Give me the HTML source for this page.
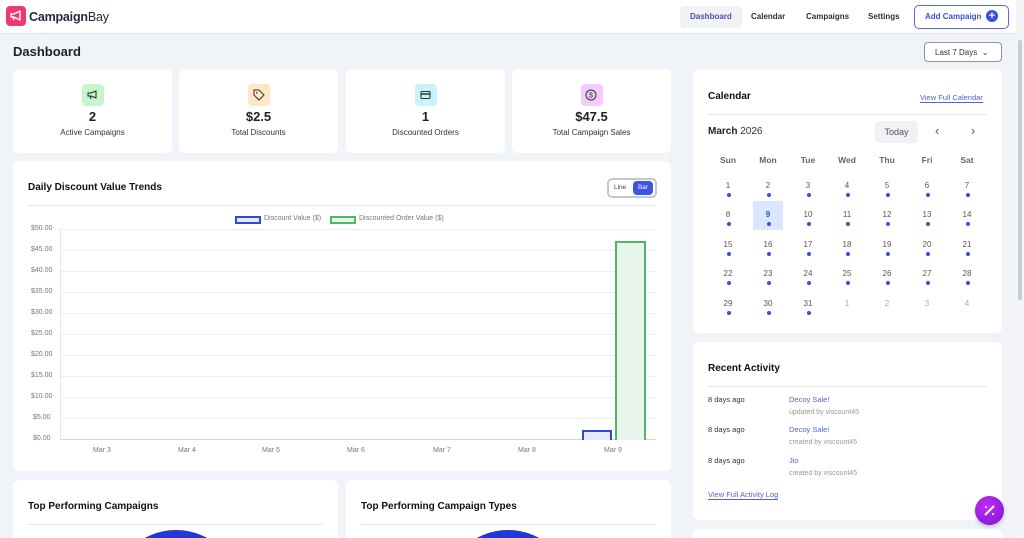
<!DOCTYPE html>
<html style="width:1024px;height:538px;overflow:hidden"><head><meta charset="utf-8"><style>
*{box-sizing:border-box;margin:0;padding:0}
body{width:1024px;height:538px;overflow:hidden;background:#f0f3f8;font-family:"Liberation Sans",sans-serif;color:#1d2127;position:relative}
.a{position:absolute}
.card{position:absolute;background:#fff;border-radius:6px}
.hdr{position:absolute;left:0;top:0;width:1016px;height:34px;background:#fff;border-bottom:1px solid #dde1e7}
.nav{position:absolute;top:12px;font-size:8px;font-weight:bold;color:#2a2f3a}
.stat .ic{position:absolute;left:50%;top:15px;width:22px;height:22px;margin-left:-11px;border-radius:4px}
.stat .n{position:absolute;left:0;right:0;top:40px;text-align:center;font-size:13px;font-weight:bold}
.stat .l{position:absolute;left:0;right:0;top:59px;text-align:center;font-size:8px;color:#333}
.t{font-size:10px;font-weight:bold;color:#111}
.hr{position:absolute;height:1px;background:#e3e6ea}
.yl{position:absolute;left:22px;width:32px;font-size:7px;color:#777;text-align:left}
.gl{position:absolute;left:60px;width:596px;height:1px;background:#eceef1}
.xl{position:absolute;top:447px;font-size:7px;color:#777;width:40px;text-align:center}
.wd{position:absolute;top:155px;width:40px;text-align:center;font-size:8.5px;font-weight:bold;color:#666}
.d{position:absolute;width:40px;text-align:center;font-size:8px;color:#555}
.dot{position:absolute;width:4px;height:4px;border-radius:2px;background:#3450e6}
.act{position:absolute;font-size:7.5px}
</style></head><body>
<div class="hdr"></div>
<div class="a" style="left:6px;top:6px;width:20px;height:20px;border-radius:4px;background:#f1376f"></div>
<svg class="a" style="left:9px;top:10px" width="14" height="12" viewBox="0 0 14 12"><path d="M2 4h3l6-3v9L5 7H2z M4 7l1 3" fill="none" stroke="#fff" stroke-width="1.4" stroke-linejoin="round"/></svg>
<div class="a" style="left:29px;top:10px;font-size:12.5px;font-weight:bold;color:#1f2a3c;letter-spacing:-0.2px">Campaign<span style="font-weight:normal">Bay</span></div>
<div class="a" style="left:680px;top:6px;width:62px;height:22px;border-radius:4px;background:#f0f2f5"></div>
<div class="nav" style="left:690px;color:#4a4fb8">Dashboard</div>
<div class="nav" style="left:751px">Calendar</div>
<div class="nav" style="left:806px">Campaigns</div>
<div class="nav" style="left:868px">Settings</div>
<div class="a" style="left:914px;top:5px;width:95px;height:24px;border:1px solid #5468e8;border-radius:5px;background:#fff"></div>
<div class="nav" style="left:925px;color:#3d4fd8">Add Campaign</div>
<div class="a" style="left:986px;top:10px;width:12px;height:12px;border-radius:6px;background:#3d4fd8;color:#fff;font-size:11px;line-height:12px;text-align:center;font-weight:bold">+</div>
<div class="a" style="left:1016px;top:0;width:8px;height:538px;background:#f4f5f7"></div>
<div class="a" style="left:1018px;top:40px;width:4px;height:260px;background:#c9ccd1;border-radius:2px"></div>

<div class="a" style="left:13px;top:44px;font-size:13px;font-weight:bold">Dashboard</div>
<div class="a" style="left:924px;top:42px;width:78px;height:20px;border:1px solid #8f959e;border-radius:4px;background:#fff;font-size:8px;color:#333;padding:5px 0 0 10px">Last 7 Days &nbsp;⌄</div>

<div class="card stat" style="left:13px;top:69px;width:159px;height:84px"><div class="ic" style="background:#c7f6cd"></div><svg class="a" style="left:74px;top:21px" width="11" height="10" viewBox="0 0 11 10"><path d="M1 3h3l5-2v7L4 6H1z M3 6l1 3" fill="none" stroke="#222" stroke-width="1"/></svg><div class="n">2</div><div class="l">Active Campaigns</div></div>
<div class="card stat" style="left:179px;top:69px;width:159px;height:84px"><div class="ic" style="background:#fde7c4"></div><svg class="a" style="left:74px;top:20px" width="12" height="12" viewBox="0 0 12 12"><path d="M1 1h5l5 5-5 5-5-5z" fill="none" stroke="#333" stroke-width="1"/><circle cx="3.8" cy="3.8" r=".8" fill="#333"/></svg><div class="n">$2.5</div><div class="l">Total Discounts</div></div>
<div class="card stat" style="left:346px;top:69px;width:159px;height:84px"><div class="ic" style="background:#c8f3fb"></div><svg class="a" style="left:74px;top:21px" width="11" height="10" viewBox="0 0 11 10"><rect x="1" y="1.5" width="9" height="7" rx="1" fill="none" stroke="#333" stroke-width="1.1"/><path d="M1 4h9" stroke="#333" stroke-width="1.5"/></svg><div class="n">1</div><div class="l">Discounted Orders</div></div>
<div class="card stat" style="left:512px;top:69px;width:159px;height:84px"><div class="ic" style="background:#f3ccfb"></div><svg class="a" style="left:73px;top:20px" width="12" height="12" viewBox="0 0 12 12"><circle cx="6" cy="6" r="5" fill="none" stroke="#333" stroke-width="1"/><text x="6" y="8.5" font-size="7" text-anchor="middle" fill="#333" font-family="Liberation Sans">$</text></svg><div class="n">$47.5</div><div class="l">Total Campaign Sales</div></div>

<div class="card" style="left:13px;top:161px;width:658px;height:310px"></div>
<div class="a t" style="left:28px;top:182px">Daily Discount Value Trends</div>
<div class="a" style="left:607px;top:178px;width:50px;height:20px;border:2px solid #c4c7cc;border-radius:5px;background:#fff"></div>
<div class="a" style="left:614px;top:184px;font-size:6.5px;color:#444">Line</div>
<div class="a" style="left:633px;top:181px;width:20px;height:14px;border-radius:4px;background:#3d55e6;color:#fff;font-size:6.5px;text-align:center;line-height:14px">Bar</div>
<div class="hr" style="left:28px;top:205px;width:628px"></div>
<div class="a" style="left:235px;top:216px;width:26px;height:8px;border:2px solid #2f48d6;background:#e6e9fb"></div>
<div class="a" style="left:264px;top:215px;font-size:7px;color:#777">Discount Value ($)</div>
<div class="a" style="left:330px;top:216px;width:26px;height:8px;border:2px solid #4fb865;background:#e8f5ea"></div>
<div class="a" style="left:359px;top:215px;font-size:7px;color:#777">Discounted Order Value ($)</div>
<div class="gl" style="top:229px"></div><div class="yl" style="top:225px;left:31px">$50.00</div>
<div class="gl" style="top:250px"></div><div class="yl" style="top:246px;left:31px">$45.00</div>
<div class="gl" style="top:271px"></div><div class="yl" style="top:267px;left:31px">$40.00</div>
<div class="gl" style="top:292px"></div><div class="yl" style="top:288px;left:31px">$35.00</div>
<div class="gl" style="top:313px"></div><div class="yl" style="top:309px;left:31px">$30.00</div>
<div class="gl" style="top:334px"></div><div class="yl" style="top:330px;left:31px">$25.00</div>
<div class="gl" style="top:355px"></div><div class="yl" style="top:351px;left:31px">$20.00</div>
<div class="gl" style="top:376px"></div><div class="yl" style="top:372px;left:31px">$15.00</div>
<div class="gl" style="top:397px"></div><div class="yl" style="top:393px;left:31px">$10.00</div>
<div class="gl" style="top:418px"></div><div class="yl" style="top:414px;left:33px">$5.00</div>
<div class="gl" style="top:439px;background:#d5d8dc"></div><div class="yl" style="top:435px;left:33px">$0.00</div>
<div class="a" style="left:60px;top:229px;width:1px;height:211px;background:#e3e5e8"></div>
<div class="a" style="left:582px;top:430px;width:30px;height:10px;border:2px solid #2f48d6;border-bottom:none;background:#e6e9fb"></div>
<div class="a" style="left:615px;top:241px;width:31px;height:199px;border:2px solid #4fb865;border-bottom:none;background:#e8f5ea"></div>
<div class="xl" style="left:82px">Mar 3</div><div class="xl" style="left:167px">Mar 4</div><div class="xl" style="left:251px">Mar 5</div><div class="xl" style="left:336px">Mar 6</div><div class="xl" style="left:422px">Mar 7</div><div class="xl" style="left:507px">Mar 8</div><div class="xl" style="left:593px">Mar 9</div>

<div class="card" style="left:13px;top:480px;width:325px;height:58px;overflow:hidden;border-radius:6px 6px 0 0"><div class="a" style="left:98px;top:50px;width:130px;height:130px;border-radius:50%;background:#2238d6"></div></div>
<div class="a t" style="left:28px;top:501px">Top Performing Campaigns</div>
<div class="hr" style="left:28px;top:524px;width:295px"></div>
<div class="card" style="left:346px;top:480px;width:325px;height:58px;overflow:hidden;border-radius:6px 6px 0 0"><div class="a" style="left:97px;top:50px;width:130px;height:130px;border-radius:50%;background:#2238d6"></div></div>
<div class="a t" style="left:361px;top:501px">Top Performing Campaign Types</div>
<div class="hr" style="left:361px;top:524px;width:295px"></div>

<div class="card" style="left:693px;top:69px;width:309px;height:264px"></div>
<div class="a t" style="left:708px;top:91px">Calendar</div>
<div class="a" style="left:920px;top:93px;font-size:7.5px;color:#4f63e0;border-bottom:1px solid #4f63e0">View Full Calendar</div>
<div class="hr" style="left:708px;top:114px;width:279px"></div>
<div class="a" style="left:708px;top:126px;font-size:10px"><b>March</b> <span style="color:#333">2026</span></div>
<div class="a" style="left:875px;top:121px;width:43px;height:22px;border-radius:4px;background:#eff1f4;font-size:9px;color:#555;text-align:center;line-height:22px">Today</div>
<div class="a" style="left:935px;top:123px;font-size:13px;color:#555">‹</div>
<div class="a" style="left:971px;top:123px;font-size:13px;color:#555">›</div>
<div class="wd" style="left:708px">Sun</div><div class="wd" style="left:748px">Mon</div><div class="wd" style="left:788px">Tue</div><div class="wd" style="left:827px">Wed</div><div class="wd" style="left:867px">Thu</div><div class="wd" style="left:907px">Fri</div><div class="wd" style="left:947px">Sat</div>
<div class="a" style="left:753px;top:201px;width:30px;height:29px;background:#dbe7fc"></div>
<div id="cal"></div>
<script>
var h='',xs=[728,768,808,847,887,927,967],ys=[186,215,245,274,304],n=1;
for(var r=0;r<5;r++)for(var c=0;c<7;c++){var day,cur=true;if(n>31){day=n-31;cur=false}else day=n;n++;
h+='<div class="d" style="left:'+(xs[c]-20)+'px;top:'+(ys[r]-5)+'px;'+(cur?'':'color:#aaa;')+(day==9&&cur?'color:#2f48d6;font-weight:bold;':'')+'">'+day+'</div>';
if(cur)h+='<div class="dot" style="left:'+(xs[c]-1)+'px;top:'+(ys[r]+7)+'px"></div>';}
document.getElementById('cal').innerHTML=h;
</script>

<div class="card" style="left:693px;top:342px;width:309px;height:178px"></div>
<div class="a t" style="left:708px;top:363px">Recent Activity</div>
<div class="hr" style="left:708px;top:386px;width:279px"></div>
<div class="act" style="left:708px;top:395px;color:#333">8 days ago</div><div class="act" style="left:789px;top:395px;color:#4f63e0">Decoy Sale!</div><div class="act" style="left:789px;top:409px;color:#999;font-size:7px">updated by viscount45</div>
<div class="act" style="left:708px;top:425px;color:#333">8 days ago</div><div class="act" style="left:789px;top:425px;color:#4f63e0">Decoy Sale!</div><div class="act" style="left:789px;top:439px;color:#999;font-size:7px">created by viscount45</div>
<div class="act" style="left:708px;top:456px;color:#333">8 days ago</div><div class="act" style="left:789px;top:456px;color:#4f63e0">Jio</div><div class="act" style="left:789px;top:470px;color:#999;font-size:7px">created by viscount45</div>
<div class="act" style="left:708px;top:490px;color:#4f63e0;border-bottom:1px solid #4f63e0">View Full Activity Log</div>
<div class="card" style="left:693px;top:529px;width:309px;height:9px;border-radius:6px 6px 0 0"></div>
<div class="a" style="left:975px;top:496px;width:29px;height:29px;border-radius:50%;background:radial-gradient(circle at 40% 35%,#c02ef0,#7a12d8);box-shadow:0 2px 4px rgba(0,0,0,.2)"></div>
<svg class="a" style="left:982px;top:503px" width="15" height="15" viewBox="0 0 15 15"><path d="M3 12L12 3" stroke="#fff" stroke-width="2"/><path d="M4 3v2M3 4h2M11 10v2M10 11h2" stroke="#fff" stroke-width="1"/></svg>
</body></html>
